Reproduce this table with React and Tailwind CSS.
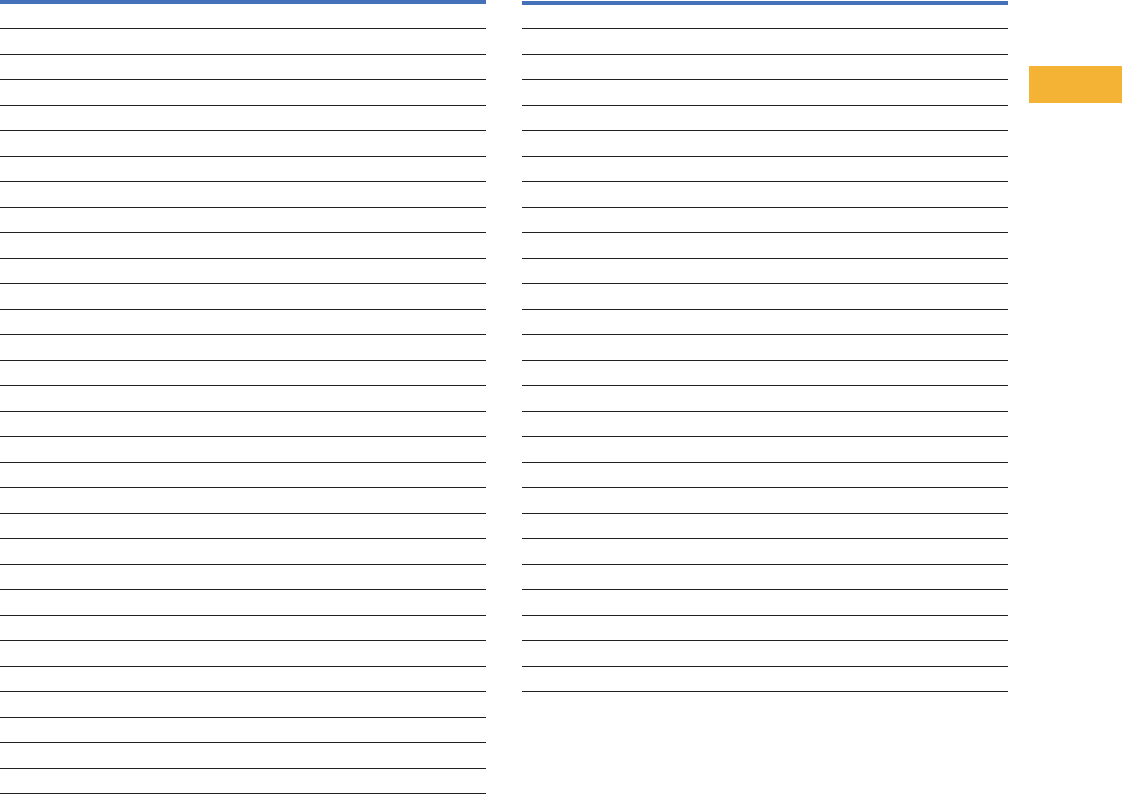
export default function App() {
  const left = Array.from({ length: 31 });
  const right = Array.from({ length: 27 });
  return (
    <div className="flex w-[1122px] h-[794px] overflow-hidden bg-white">
      <div className="w-[486px] shrink-0 flex flex-col">
        <div className="h-[4px] bg-[#4471BA]" />
        {left.map((_, i) => (
          <div
            key={i}
            className={
              (i === 0 ? "h-[25px]" : "h-[25.5px]") +
              " shrink-0 border-b border-[#231F20]"
            }
          />
        ))}
      </div>
      <div className="w-[486px] shrink-0 ml-[36px] pt-[1px] flex flex-col">
        <div className="h-[4px] bg-[#4471BA]" />
        {right.map((_, i) => (
          <div
            key={i}
            className={
              (i === 0 ? "h-[24px]" : "h-[25.5px]") +
              " shrink-0 border-b border-[#231F20]"
            }
          />
        ))}
      </div>
      <div className="ml-[21px] flex-1">
        <div className="mt-[66px] h-[37px] bg-[#F5B335]" />
      </div>
    </div>
  );
}
